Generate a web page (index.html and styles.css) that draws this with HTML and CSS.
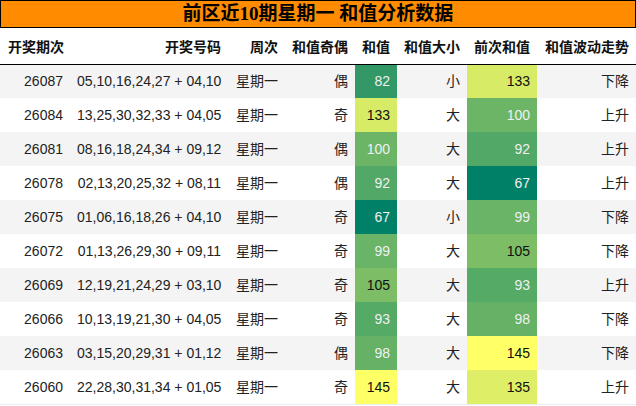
FILE: index.html
```html
<!DOCTYPE html>
<html lang="zh">
<head>
<meta charset="utf-8">
<title>前区近10期星期一 和值分析数据</title>
<link rel="stylesheet" href="styles.css">
</head>
<body>
<div class="sheet">
  <div class="title">前区近10期星期一 和值分析数据</div>
  <table class="grid">
    <colgroup>
      <col class="c1"><col class="c2"><col class="c3"><col class="c4"><col class="c5"><col class="c6"><col class="c7"><col class="c8">
    </colgroup>
    <thead>
      <tr><th>开奖期次</th><th>开奖号码</th><th>周次</th><th>和值奇偶</th><th>和值</th><th>和值大小</th><th>前次和值</th><th>和值波动走势</th></tr>
    </thead>
    <tbody>
      <tr><td>26087</td><td>05,10,16,24,27 + 04,10</td><td>星期一</td><td>偶</td><td class="light" style="background:rgb(49,152,102)">82</td><td>小</td><td class="dark" style="background:rgb(216,235,102)">133</td><td>下降</td></tr>
      <tr><td>26084</td><td>13,25,30,32,33 + 04,05</td><td>星期一</td><td>奇</td><td class="dark" style="background:rgb(216,235,102)">133</td><td>大</td><td class="light" style="background:rgb(108,181,102)">100</td><td>上升</td></tr>
      <tr><td>26081</td><td>08,16,18,24,34 + 09,12</td><td>星期一</td><td>偶</td><td class="light" style="background:rgb(108,181,102)">100</td><td>大</td><td class="light" style="background:rgb(82,168,102)">92</td><td>上升</td></tr>
      <tr><td>26078</td><td>02,13,20,25,32 + 08,11</td><td>星期一</td><td>偶</td><td class="light" style="background:rgb(82,168,102)">92</td><td>大</td><td class="light" style="background:rgb(0,128,102)">67</td><td>上升</td></tr>
      <tr><td>26075</td><td>01,06,16,18,26 + 04,10</td><td>星期一</td><td>奇</td><td class="light" style="background:rgb(0,128,102)">67</td><td>小</td><td class="light" style="background:rgb(105,180,102)">99</td><td>下降</td></tr>
      <tr><td>26072</td><td>01,13,26,29,30 + 09,11</td><td>星期一</td><td>奇</td><td class="light" style="background:rgb(105,180,102)">99</td><td>大</td><td class="dark" style="background:rgb(124,189,102)">105</td><td>下降</td></tr>
      <tr><td>26069</td><td>12,19,21,24,29 + 03,10</td><td>星期一</td><td>奇</td><td class="dark" style="background:rgb(124,189,102)">105</td><td>大</td><td class="light" style="background:rgb(85,170,102)">93</td><td>上升</td></tr>
      <tr><td>26066</td><td>10,13,19,21,30 + 04,05</td><td>星期一</td><td>奇</td><td class="light" style="background:rgb(85,170,102)">93</td><td>大</td><td class="light" style="background:rgb(101,178,102)">98</td><td>下降</td></tr>
      <tr><td>26063</td><td>03,15,20,29,31 + 01,12</td><td>星期一</td><td>偶</td><td class="light" style="background:rgb(101,178,102)">98</td><td>大</td><td class="dark" style="background:rgb(255,255,102)">145</td><td>下降</td></tr>
      <tr><td>26060</td><td>22,28,30,31,34 + 01,05</td><td>星期一</td><td>奇</td><td class="dark" style="background:rgb(255,255,102)">145</td><td>大</td><td class="dark" style="background:rgb(222,238,102)">135</td><td>上升</td></tr>
    </tbody>
  </table>
</div>
</body>
</html>
```

FILE: styles.css
```css
html, body {
  margin: 0;
  padding: 0;
  background: #ffffff;
}

.sheet {
  width: 636px;
}

.title {
  box-sizing: border-box;
  height: 28px;
  border: 1px solid #000000;
  background: #ff8c00;
  color: #000000;
  font-family: "Liberation Serif", "Noto Sans CJK SC", serif;
  font-weight: bold;
  font-size: 19px;
  line-height: 26px;
  text-align: center;
}

.grid {
  width: 636px;
  border-collapse: collapse;
  table-layout: fixed;
  font-family: "Liberation Sans", "Noto Sans CJK SC", sans-serif;
  font-size: 14px;
  color: #222222;
}

.c1 { width: 70px; }
.c2 { width: 158px; }
.c3 { width: 57px; }
.c4 { width: 70px; }
.c5 { width: 42px; }
.c6 { width: 70px; }
.c7 { width: 70px; }
.c8 { width: 99px; }

.grid th {
  box-sizing: border-box;
  height: 36px;
  padding: 9px 7px 0 7px;
  line-height: 20px;
  font-weight: bold;
  color: #111111;
  text-align: right;
  vertical-align: top;
  white-space: nowrap;
  border-bottom: 1px solid #000000;
}

.grid th:first-child {
  text-align: left;
  padding-left: 8px;
}

.grid td {
  box-sizing: border-box;
  height: 34px;
  padding: 0 7px;
  line-height: 20px;
  text-align: right;
  white-space: nowrap;
}

.grid tbody tr:nth-child(odd) {
  background: #f4f4f4;
}

.grid tbody tr:last-child td {
  border-bottom: 1px solid #efefef;
}

.grid td.light {
  color: #f0f0f0;
}

.grid td.dark {
  color: #111111;
}
```
